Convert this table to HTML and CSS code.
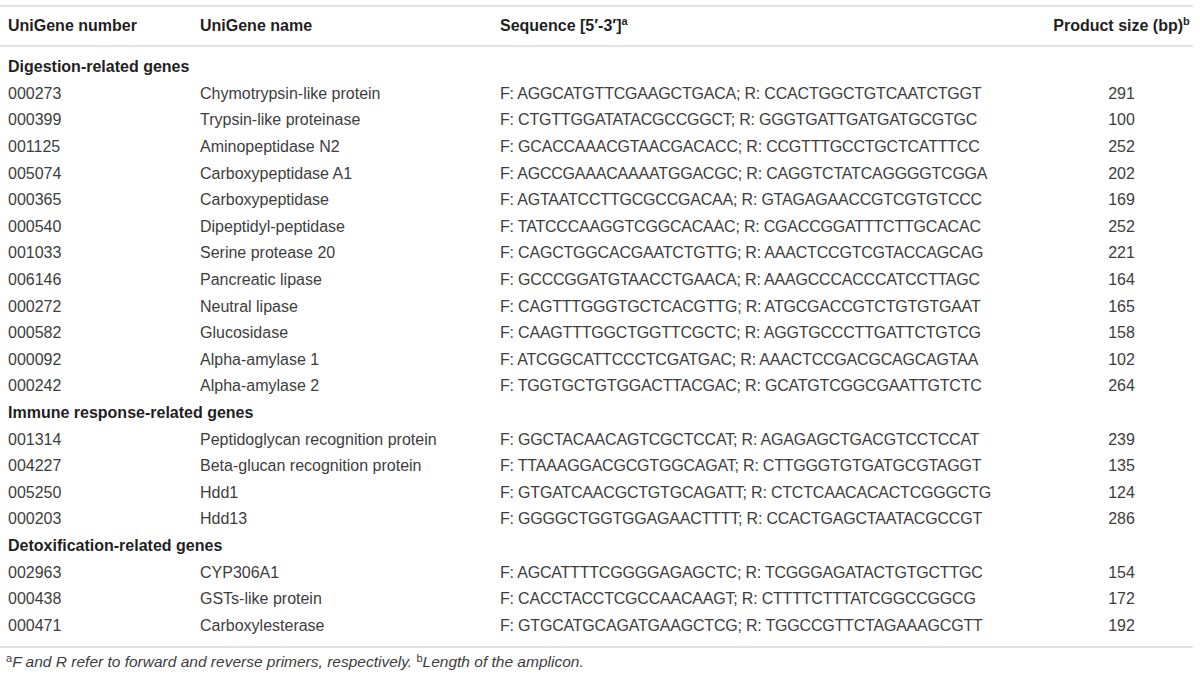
FILE: index.html
```html
<!DOCTYPE html>
<html>
<head>
<meta charset="utf-8">
<link rel="stylesheet" href="styles.css">
</head>
<body>
<div class="wrap">
<table class="primers">
  <colgroup>
    <col class="c1"><col class="c2"><col class="c3"><col class="c4">
  </colgroup>
  <thead>
    <tr>
      <th>UniGene number</th>
      <th>UniGene name</th>
      <th>Sequence [5′-3′]<sup>a</sup></th>
      <th class="size">Product size (bp)<sup>b</sup></th>
    </tr>
  </thead>
  <tbody>
    <tr class="section first"><td colspan="4">Digestion-related genes</td></tr>
    <tr><td>000273</td><td>Chymotrypsin-like protein</td><td class="seq">F: AGGCATGTTCGAAGCTGACA; R: CCACTGGCTGTCAATCTGGT</td><td class="size">291</td></tr>
    <tr><td>000399</td><td>Trypsin-like proteinase</td><td class="seq">F: CTGTTGGATATACGCCGGCT; R: GGGTGATTGATGATGCGTGC</td><td class="size">100</td></tr>
    <tr><td>001125</td><td>Aminopeptidase N2</td><td class="seq">F: GCACCAAACGTAACGACACC; R: CCGTTTGCCTGCTCATTTCC</td><td class="size">252</td></tr>
    <tr><td>005074</td><td>Carboxypeptidase A1</td><td class="seq">F: AGCCGAAACAAAATGGACGC; R: CAGGTCTATCAGGGGTCGGA</td><td class="size">202</td></tr>
    <tr><td>000365</td><td>Carboxypeptidase</td><td class="seq">F: AGTAATCCTTGCGCCGACAA; R: GTAGAGAACCGTCGTGTCCC</td><td class="size">169</td></tr>
    <tr><td>000540</td><td>Dipeptidyl-peptidase</td><td class="seq">F: TATCCCAAGGTCGGCACAAC; R: CGACCGGATTTCTTGCACAC</td><td class="size">252</td></tr>
    <tr><td>001033</td><td>Serine protease 20</td><td class="seq">F: CAGCTGGCACGAATCTGTTG; R: AAACTCCGTCGTACCAGCAG</td><td class="size">221</td></tr>
    <tr><td>006146</td><td>Pancreatic lipase</td><td class="seq">F: GCCCGGATGTAACCTGAACA; R: AAAGCCCACCCATCCTTAGC</td><td class="size">164</td></tr>
    <tr><td>000272</td><td>Neutral lipase</td><td class="seq">F: CAGTTTGGGTGCTCACGTTG; R: ATGCGACCGTCTGTGTGAAT</td><td class="size">165</td></tr>
    <tr><td>000582</td><td>Glucosidase</td><td class="seq">F: CAAGTTTGGCTGGTTCGCTC; R: AGGTGCCCTTGATTCTGTCG</td><td class="size">158</td></tr>
    <tr><td>000092</td><td>Alpha-amylase 1</td><td class="seq">F: ATCGGCATTCCCTCGATGAC; R: AAACTCCGACGCAGCAGTAA</td><td class="size">102</td></tr>
    <tr><td>000242</td><td>Alpha-amylase 2</td><td class="seq">F: TGGTGCTGTGGACTTACGAC; R: GCATGTCGGCGAATTGTCTC</td><td class="size">264</td></tr>
    <tr class="section"><td colspan="4">Immune response-related genes</td></tr>
    <tr><td>001314</td><td>Peptidoglycan recognition protein</td><td class="seq">F: GGCTACAACAGTCGCTCCAT; R: AGAGAGCTGACGTCCTCCAT</td><td class="size">239</td></tr>
    <tr><td>004227</td><td>Beta-glucan recognition protein</td><td class="seq">F: TTAAAGGACGCGTGGCAGAT; R: CTTGGGTGTGATGCGTAGGT</td><td class="size">135</td></tr>
    <tr><td>005250</td><td>Hdd1</td><td class="seq">F: GTGATCAACGCTGTGCAGATT; R: CTCTCAACACACTCGGGCTG</td><td class="size">124</td></tr>
    <tr><td>000203</td><td>Hdd13</td><td class="seq">F: GGGGCTGGTGGAGAACTTTT; R: CCACTGAGCTAATACGCCGT</td><td class="size">286</td></tr>
    <tr class="section"><td colspan="4">Detoxification-related genes</td></tr>
    <tr><td>002963</td><td>CYP306A1</td><td class="seq">F: AGCATTTTCGGGGAGAGCTC; R: TCGGGAGATACTGTGCTTGC</td><td class="size">154</td></tr>
    <tr><td>000438</td><td>GSTs-like protein</td><td class="seq">F: CACCTACCTCGCCAACAAGT; R: CTTTTCTTTATCGGCCGGCG</td><td class="size">172</td></tr>
    <tr class="last"><td>000471</td><td>Carboxylesterase</td><td class="seq">F: GTGCATGCAGATGAAGCTCG; R: TGGCCGTTCTAGAAAGCGTT</td><td class="size">192</td></tr>
  </tbody>
</table>
<p class="note"><sup>a</sup><em>F and R refer to forward and reverse primers, respectively.</em> <sup>b</sup><em>Length of the amplicon.</em></p>
</div>
</body>
</html>
```

FILE: styles.css
```css
html, body {
  margin: 0;
  padding: 0;
  background: #ffffff;
}
body {
  font-family: "Liberation Sans", Arial, Helvetica, sans-serif;
  color: #3d3d3d;
}
.wrap {
  width: 1193px;
  padding-top: 5px;
}
.primers {
  width: 1193px;
  border-collapse: collapse;
  table-layout: fixed;
  font-size: 16px;
}
.c1 { width: 192px; }
.c2 { width: 300px; }
.c3 { width: 558px; }
.c4 { width: 143px; }
.primers thead th {
  border-top: 2px solid #e2e2e2;
  border-bottom: 2px solid #e2e2e2;
  height: 38px;
  padding: 0 0 0 8px;
  text-align: left;
  font-weight: bold;
  color: #1f1f1f;
  vertical-align: middle;
}
.primers thead th.size {
  text-align: center;
  padding: 0;
}
.primers td {
  height: 26.6px;
  padding: 0 0 0 8px;
  line-height: 18px;
  vertical-align: middle;
  white-space: nowrap;
}
.primers td.seq {
  letter-spacing: -0.2px;
}
.primers td.size {
  text-align: center;
  padding: 0;
}
.primers tr.section td {
  font-weight: bold;
  color: #1f1f1f;
}
.primers tr.first td {
  padding-top: 7px;
}
.primers tr.last td {
  padding-bottom: 7px;
  border-bottom: 2px solid #e2e2e2;
}
sup {
  font-size: 11px;
  line-height: 0;
  vertical-align: 6px;
}
.note {
  margin: 0;
  padding: 5px 0 0 6px;
  font-size: 15.5px;
  line-height: 18px;
  color: #3d3d3d;
}
.note sup {
  font-size: 11px;
  vertical-align: 5px;
}
```
